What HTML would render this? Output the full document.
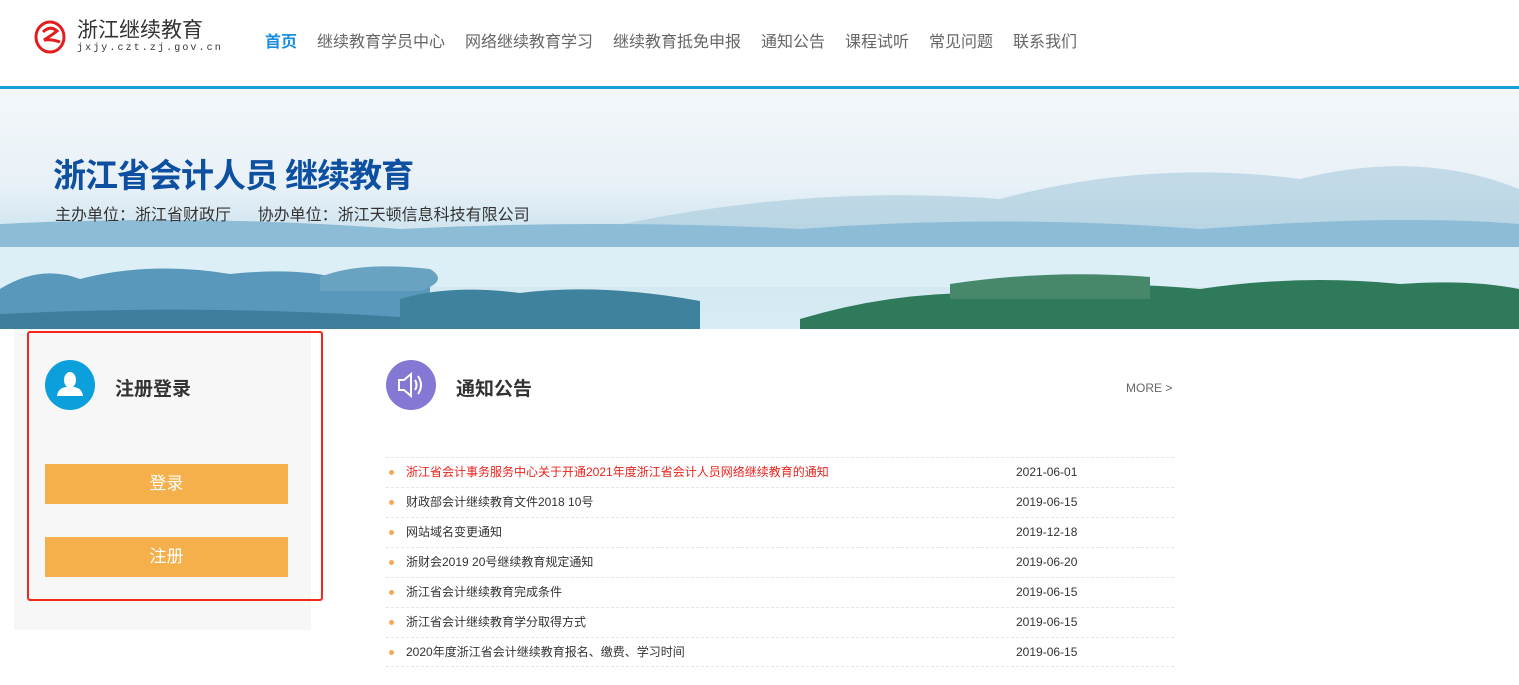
<!DOCTYPE html>
<html><head><meta charset="utf-8"><style>
*{margin:0;padding:0;box-sizing:border-box}
body{width:1519px;height:685px;position:relative;overflow:hidden;background:#fff;font-family:"Liberation Sans","Noto Sans CJK SC",sans-serif;color:#333}
.a{position:absolute;white-space:nowrap}
.nav span{position:absolute;top:28px;font-size:16px;color:#666}
.row{position:absolute;left:386px;width:788px;height:30px;border-top:1px dashed #e6e6e6;font-size:12px;color:#333;line-height:29px}
.row i{position:absolute;left:3px;top:12px;width:5px;height:5px;border-radius:50%;background:#f5a85a}
.row b{font-weight:normal;position:absolute;left:20px;top:0}
.row em{font-style:normal;position:absolute;left:630px;top:0}
</style></head><body>
<svg class="a" style="left:34px;top:20px" width="34" height="34" viewBox="0 0 34 34"><ellipse cx="16" cy="17" rx="14" ry="15" fill="none" stroke="#e21d1d" stroke-width="3"/><path d="M9 12 Q16 5 23 11 Q18 15 10 20 Q18 19 26 22" fill="none" stroke="#e21d1d" stroke-width="3"/></svg>
<div class="a" style="left:77px;top:18px;font-size:21px;line-height:26px;color:#333">浙江继续教育</div>
<div class="a" style="left:77px;top:43px;font-size:10px;line-height:12px;color:#333;letter-spacing:2.1px;font-family:'Liberation Mono',monospace">jxjy.czt.zj.gov.cn</div>
<div class="nav">
<span style="left:265px;color:#1a8ee0;font-weight:bold">首页</span>
<span style="left:317px">继续教育学员中心</span>
<span style="left:465px">网络继续教育学习</span>
<span style="left:613px">继续教育抵免申报</span>
<span style="left:761px">通知公告</span>
<span style="left:845px">课程试听</span>
<span style="left:929px">常见问题</span>
<span style="left:1013px">联系我们</span>
</div>
<div class="a" style="left:0;top:86px;width:1519px;height:3px;background:#1b9ad8"></div>
<div class="a" style="left:0;top:89px;width:1519px;height:240px;overflow:hidden;background:linear-gradient(180deg,#f3f7fa 0%,#e8f1f7 40%,#cfe4ef 60%,#d8ecf5 100%)">
<svg width="1519" height="240" viewBox="0 0 1519 240" style="position:absolute;left:0;top:0">
<path d="M600 140 Q800 95 1000 110 Q1150 70 1300 90 Q1420 60 1519 100 L1519 160 L600 160Z" fill="#a9c9dc" opacity=".6"/>
<path d="M0 135 Q200 125 400 140 Q600 130 800 140 Q1000 125 1200 140 Q1400 125 1519 135 L1519 160 L0 160Z" fill="#8dbcd6"/>
<rect x="0" y="158" width="1519" height="40" fill="#dceff7"/>
<path d="M0 200 Q40 175 80 190 Q150 172 230 185 Q300 178 340 190 Q380 180 430 198 L430 240 L0 240Z" fill="#5a98bb"/>
<path d="M320 188 Q360 172 430 180 Q450 192 420 202 L320 202Z" fill="#6aa3c2"/>
<path d="M400 210 Q450 195 520 204 Q600 194 700 212 L700 240 L400 240Z" fill="#3f829e"/>
<path d="M0 225 Q200 215 400 228 L400 240 L0 240Z" fill="#3e7d9c"/>
<path d="M800 230 Q900 200 1000 205 Q1100 190 1200 200 Q1300 185 1400 195 Q1470 190 1519 200 L1519 240 L800 240Z" fill="#2f7a5a"/>
<path d="M950 195 Q1050 180 1150 188 L1150 210 L950 210Z" fill="#47876a"/>
</svg>
<div class="a" style="left:53px;top:60px;font-size:33px;font-weight:bold;color:#0d4fa0;letter-spacing:-1px">浙江省会计人员 继续教育</div>
<div class="a" style="left:55px;top:112px;font-size:16px;color:#333">主办单位：浙江省财政厅&nbsp;&nbsp;&nbsp;&nbsp;&nbsp;&nbsp;协办单位：浙江天顿信息科技有限公司</div>
</div>
<div class="a" style="left:14px;top:329px;width:297px;height:301px;background:#f7f7f7"></div>
<div class="a" style="left:27px;top:331px;width:296px;height:270px;border:2px solid #f3271d;border-radius:3px"></div>
<div class="a" style="left:45px;top:360px;width:50px;height:50px;border-radius:50%;background:#0ba0dc">
<svg width="50" height="50" viewBox="0 0 50 50"><ellipse cx="25" cy="20" rx="6" ry="8" fill="#fff"/><path d="M12 36 Q13 28 21 27 L29 27 Q37 28 38 36Z" fill="#fff"/></svg></div>
<div class="a" style="left:115px;top:374px;font-size:19px;font-weight:bold;color:#333">注册登录</div>
<div class="a" style="left:45px;top:464px;width:243px;height:40px;background:#f5af4b;color:#fff;font-size:17px;text-align:center;line-height:40px">登录</div>
<div class="a" style="left:45px;top:537px;width:243px;height:40px;background:#f5af4b;color:#fff;font-size:17px;text-align:center;line-height:40px">注册</div>
<div class="a" style="left:386px;top:360px;width:50px;height:50px;border-radius:50%;background:#8378d4">
<svg width="50" height="50" viewBox="0 0 50 50" fill="none" stroke="#fff" stroke-width="2"><path d="M13 20 L18 20 L25 14 L25 36 L18 30 L13 30Z"/><path d="M29 20 Q32 25 29 30"/><path d="M32 16 Q38 25 32 34"/></svg></div>
<div class="a" style="left:456px;top:374px;font-size:19px;font-weight:bold;color:#333">通知公告</div>
<div class="a" style="left:1126px;top:381px;font-size:12px;color:#666">MORE &gt;</div>
<div class="row" style="top:457px"><i></i><b style="color:#e8231d">浙江省会计事务服务中心关于开通2021年度浙江省会计人员网络继续教育的通知</b><em>2021-06-01</em></div>
<div class="row" style="top:487px"><i></i><b>财政部会计继续教育文件2018 10号</b><em>2019-06-15</em></div>
<div class="row" style="top:517px"><i></i><b>网站域名变更通知</b><em>2019-12-18</em></div>
<div class="row" style="top:547px"><i></i><b>浙财会2019 20号继续教育规定通知</b><em>2019-06-20</em></div>
<div class="row" style="top:577px"><i></i><b>浙江省会计继续教育完成条件</b><em>2019-06-15</em></div>
<div class="row" style="top:607px"><i></i><b>浙江省会计继续教育学分取得方式</b><em>2019-06-15</em></div>
<div class="row" style="top:637px;border-bottom:1px dashed #e6e6e6"><i></i><b>2020年度浙江省会计继续教育报名、缴费、学习时间</b><em>2019-06-15</em></div>
</body></html>
